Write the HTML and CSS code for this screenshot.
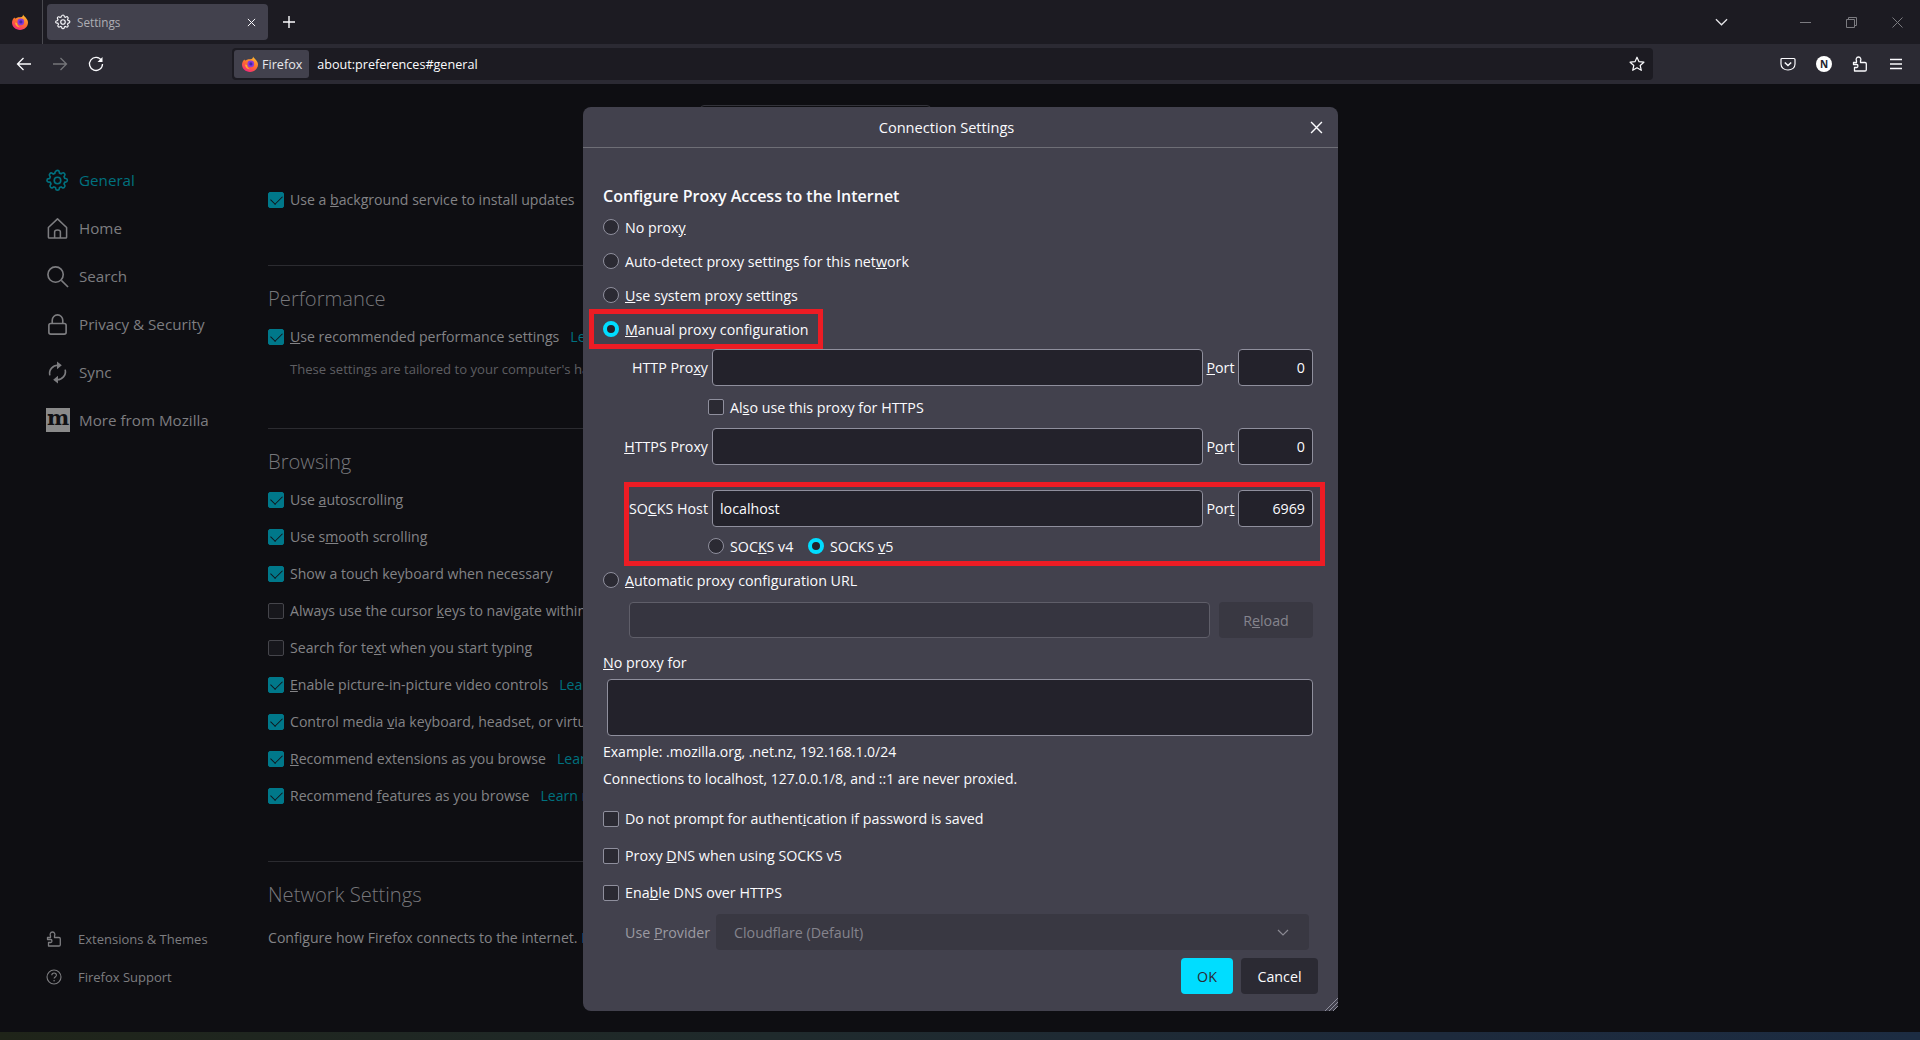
FILE: index.html
```html
<!DOCTYPE html>
<html lang="en">
<head>
  <meta charset="UTF-8">
  <title>Settings</title>
  <link rel="stylesheet" href="styles.css">
</head>
<body>

  <!-- iconos reutilizados -->
  <svg class="defs" width="0" height="0">
    <defs>
      <linearGradient id="fxBody" x1="0.8" y1="0" x2="0.3" y2="1">
        <stop offset="0" stop-color="#ffc02e"/>
        <stop offset="0.55" stop-color="#ff6a30"/>
        <stop offset="1" stop-color="#f5267c"/>
      </linearGradient>
      <symbol id="fx" viewBox="0 0 16 16">
        <path d="M11 0.500C11.600 2 13 2.600 14 4 15.300 5.600 16 7 16 8.600 16 12.700 12.400 16 8 16 3.600 16 0 12.700 0 8.600 0 6.400 1 4.600 2.400 3.400 2.600 4 3 4.300 3.600 4.500 5 3 8 3.400 9.600 3 10.800 2.700 11 1.500 11 0.500Z" fill="url(#fxBody)"/>
        <circle cx="8.800" cy="7.900" r="3.300" fill="#8a3ad8"/>
        <circle cx="8.900" cy="7.900" r="1.600" fill="#3f2aa8"/>
        <path d="M3 8.500C3.300 11.800 5.800 13.600 8.500 13.200 6.500 12.800 5 11.300 5 9Z" fill="#ffb02a"/>
      </symbol>
      <symbol id="gear" viewBox="0 0 24 24">
        <path d="M12 1.500c1 0 1.800.8 1.900 1.700l.2 1.100 1.700.7 1-.7c.8-.5 1.800-.4 2.400.3.700.7.800 1.700.2 2.500l-.6.900.7 1.700 1.100.2c.9.100 1.700.9 1.700 1.900s-.8 1.800-1.700 1.900l-1.100.2-.7 1.700.6.900c.6.800.5 1.800-.2 2.500-.6.700-1.600.8-2.400.3l-1-.7-1.700.7-.2 1.100c-.1.900-.9 1.700-1.900 1.700s-1.800-.8-1.900-1.700l-.2-1.100-1.700-.7-1 .7c-.8.500-1.800.4-2.400-.3-.7-.7-.8-1.700-.2-2.500l.6-.9-.7-1.700-1.100-.2C1.800 13.800 1 13 1 12s.8-1.800 1.700-1.900l1.100-.2.7-1.700-.6-.9c-.6-.8-.5-1.800.2-2.500.6-.7 1.600-.8 2.400-.3l1 .7 1.700-.7.2-1.100C10.200 2.300 11 1.500 12 1.500Z" fill="none" stroke="currentColor" stroke-width="1.700"/>
        <circle cx="12" cy="12" r="3.400" fill="none" stroke="currentColor" stroke-width="1.700"/>
      </symbol>
      <symbol id="puzzle" viewBox="0 0 16 16">
        <path d="M1.500 6.500h3V4.800C3.800 4 4 1 6.500 1S9.200 4 8.500 4.800v1.700h4.500c.8 0 1.300.5 1.300 1.300v5.900c0 .8-.5 1.300-1.300 1.300H2.500v-3.500h2.300c1.500 0 1.500-3 0-3H1.500Z" fill="none" stroke="currentColor" stroke-width="1.300" stroke-linejoin="round"/>
      </symbol>
    </defs>
  </svg>

  <!-- Barra de pestañas -->
  <header class="tabbar">
    <div class="tabbar-logo"><svg class="ico16"><use href="#fx"/></svg></div>
    <div class="tab">
      <svg class="tab-gear"><use href="#gear"/></svg>
      <span class="tab-title">Settings</span>
      <svg class="tab-close" viewBox="0 0 10 10"><path d="M1 1l8 8M9 1l-8 8" stroke="currentColor" stroke-width="1.100"/></svg>
    </div>
    <svg class="tab-new" viewBox="0 0 12 12"><path d="M6 0v12M0 6h12" stroke="currentColor" stroke-width="1.400"/></svg>
    <div class="tabbar-right">
      <svg class="tab-list" viewBox="0 0 14 8"><path d="M1 1l6 6 6-6" fill="none" stroke="currentColor" stroke-width="1.400"/></svg>
      <div class="winbtn"><svg width="11" height="11" viewBox="0 0 11 11"><path d="M0 5.500h11" stroke="#7b7b80"/></svg></div>
      <div class="winbtn"><svg width="11" height="11" viewBox="0 0 11 11"><path d="M.5 2.500h8v8h-8zM2.500 2.500v-2h8v8h-2" fill="none" stroke="#7b7b80"/></svg></div>
      <div class="winbtn"><svg width="11" height="11" viewBox="0 0 11 11"><path d="M.5.500l10 10M10.500.500l-10 10" stroke="#7b7b80"/></svg></div>
    </div>
  </header>

  <!-- Barra de navegación -->
  <nav class="toolbar">
    <svg class="tool-ico" viewBox="0 0 16 16"><path d="M15 8H1.500M7.500 2l-6 6 6 6" fill="none" stroke="#fbfbfe" stroke-width="1.300"/></svg>
    <svg class="tool-ico" viewBox="0 0 16 16"><path d="M1 8h13.500M8.500 2l6 6-6 6" fill="none" stroke="#75757a" stroke-width="1.300"/></svg>
    <svg class="tool-ico" viewBox="0 0 16 16"><path d="M13.500 4.500A6.500 6.500 0 1 0 14.500 8" fill="none" stroke="#fbfbfe" stroke-width="1.300"/><path d="M14.500 1v5h-5z" fill="#fbfbfe"/></svg>
    <div class="urlbar">
      <div class="identity"><svg class="ico16"><use href="#fx"/></svg><span>Firefox</span></div>
      <span class="url">about:preferences#general</span>
      <svg class="star" viewBox="0 0 16 16"><path d="M8 1.200l2 4.500 4.900.5-3.700 3.300 1.100 4.800L8 11.800l-4.300 2.500 1.100-4.800L1.100 6.200 6 5.700Z" fill="none" stroke="#fbfbfe" stroke-width="1.200" stroke-linejoin="round"/></svg>
    </div>
    <div class="tool-right">
      <svg class="tool-ico" viewBox="0 0 16 16"><path d="M2 2.500h12c.6 0 1 .4 1 1V8c0 3.600-3 6-7 6s-7-2.400-7-6V3.500c0-.6.400-1 1-1Z" fill="none" stroke="#fbfbfe" stroke-width="1.200"/><path d="M4.800 6.500L8 9.500l3.200-3" fill="none" stroke="#fbfbfe" stroke-width="1.500"/></svg>
      <div class="account">N</div>
      <svg class="tool-ico tool-white"><use href="#puzzle"/></svg>
      <svg class="tool-ico tool-last" viewBox="0 0 16 16"><path d="M2 3.500h12M2 8h12M2 12.500h12" stroke="#fbfbfe" stroke-width="1.300"/></svg>
    </div>
  </nav>

  <!-- Contenido de about:preferences, atenuado por el diálogo -->
  <div class="page">
    <aside class="sidebar">
      <ul class="cats">
        <li class="cat cat-active"><svg class="cat-ico"><use href="#gear"/></svg><span>General</span></li>
        <li class="cat">
          <svg class="cat-ico" viewBox="0 0 24 24"><path d="M12 2L2.500 11v10c0 .6.400 1 1 1h17c.6 0 1-.4 1-1V11ZM9 22v-6.500c0-1 .8-2 3-2s3 1 3 2V22" fill="none" stroke="currentColor" stroke-width="1.600" stroke-linejoin="round"/></svg>
          <span>Home</span>
        </li>
        <li class="cat">
          <svg class="cat-ico" viewBox="0 0 24 24"><circle cx="10" cy="10" r="8" fill="none" stroke="currentColor" stroke-width="1.700"/><path d="M16 16l7 7" stroke="currentColor" stroke-width="1.700"/></svg>
          <span>Search</span>
        </li>
        <li class="cat">
          <svg class="cat-ico" viewBox="0 0 24 24"><path d="M6.500 11V7.500a5.500 5.500 0 0 1 11 0V11M5 11h14c1 0 2 .8 2 2v7c0 1.200-1 2-2 2H5c-1 0-2-.8-2-2v-7c0-1.200 1-2 2-2Z" fill="none" stroke="currentColor" stroke-width="1.700"/></svg>
          <span>Privacy &amp; Security</span>
        </li>
        <li class="cat">
          <svg class="cat-ico" viewBox="0 0 24 24"><path d="M4 15a8.500 8.500 0 0 1 9-10.500M20 9a8.500 8.500 0 0 1-9 10.500" fill="none" stroke="currentColor" stroke-width="1.700"/><path d="M11.500 0.500l5 4-5 4zM12.500 15.500l-5 4 5 4z" fill="currentColor"/></svg>
          <span>Sync</span>
        </li>
        <li class="cat">
          <span class="moz-ico">m</span>
          <span>More from Mozilla</span>
        </li>
      </ul>
      <ul class="side-links">
        <li class="side-link"><svg class="side-ico"><use href="#puzzle"/></svg><span>Extensions &amp; Themes</span></li>
        <li class="side-link">
          <svg class="side-ico" viewBox="0 0 16 16"><circle cx="8" cy="8" r="7" fill="none" stroke="currentColor" stroke-width="1.100"/><path d="M5.800 6.200c0-3 4.600-3 4.600 0 0 1.700-2.300 1.800-2.300 3.400" fill="none" stroke="currentColor" stroke-width="1.100"/><circle cx="8.100" cy="11.800" r=".8" fill="currentColor"/></svg>
          <span>Firefox Support</span>
        </li>
      </ul>
    </aside>

    <main class="prefs">
      <div class="find-box"></div>
      <div class="pref pref-first"><span class="chk chk-on"></span><span>Use a <u>b</u>ackground service to install updates</span></div>
      <hr class="sep sep-a">

      <h2 class="sec-title">Performance</h2>
      <div class="pref"><span class="chk chk-on"></span><span><u>U</u>se recommended performance settings</span><a class="learn">Learn more</a></div>
      <p class="pref-note">These settings are tailored to your computer's hardware and operating system.</p>
      <hr class="sep sep-b">

      <h2 class="sec-title">Browsing</h2>
      <div class="pref"><span class="chk chk-on"></span><span>Use <u>a</u>utoscrolling</span></div>
      <div class="pref"><span class="chk chk-on"></span><span>Use s<u>m</u>ooth scrolling</span></div>
      <div class="pref"><span class="chk chk-on"></span><span>Show a tou<u>c</u>h keyboard when necessary</span></div>
      <div class="pref"><span class="chk"></span><span>Always use the cursor <u>k</u>eys to navigate within pages</span></div>
      <div class="pref"><span class="chk"></span><span>Search for te<u>x</u>t when you start typing</span></div>
      <div class="pref"><span class="chk chk-on"></span><span><u>E</u>nable picture-in-picture video controls</span><a class="learn">Learn more</a></div>
      <div class="pref"><span class="chk chk-on"></span><span>Control media <u>v</u>ia keyboard, headset, or virtual interface</span></div>
      <div class="pref"><span class="chk chk-on"></span><span><u>R</u>ecommend extensions as you browse</span><a class="learn">Learn more</a></div>
      <div class="pref"><span class="chk chk-on"></span><span>Recommend <u>f</u>eatures as you browse</span><a class="learn">Learn more</a></div>
      <hr class="sep sep-c">

      <h2 class="sec-title">Network Settings</h2>
      <p class="net-text">Configure how Firefox connects to the internet. <a class="learn">Learn more</a></p>
    </main>
  </div>

  <div class="desktop-strip"></div>

  <!-- Diálogo Connection Settings -->
  <section class="dialog">
    <header class="dlg-head">
      <span>Connection Settings</span>
      <svg class="dlg-close" viewBox="0 0 12 12"><path d="M1 1l10 10M11 1L1 11" stroke="#fbfbfe" stroke-width="1.300"/></svg>
    </header>

    <div class="dlg-body">
      <h3 class="dlg-title">Configure Proxy Access to the Internet</h3>

      <label class="opt"><span class="radio"></span><span>No prox<u>y</u></span></label>
      <label class="opt"><span class="radio"></span><span>Auto-detect proxy settings for this net<u>w</u>ork</span></label>
      <label class="opt"><span class="radio"></span><span><u>U</u>se system proxy settings</span></label>
      <label class="opt"><span class="radio radio-on"></span><span><u>M</u>anual proxy configuration</span></label>

      <div class="proxy-row row-http">
        <span class="proxy-label">HTTP Pro<u>x</u>y</span>
        <input class="field field-grow" type="text">
        <span class="port-label"><u>P</u>ort</span>
        <input class="field field-port" type="text" value="0">
      </div>
      <label class="opt opt-sub row-also"><span class="box"></span><span>Al<u>s</u>o use this proxy for HTTPS</span></label>
      <div class="proxy-row row-https">
        <span class="proxy-label"><u>H</u>TTPS Proxy</span>
        <input class="field field-grow" type="text">
        <span class="port-label">P<u>o</u>rt</span>
        <input class="field field-port" type="text" value="0">
      </div>
      <div class="proxy-row row-socks">
        <span class="proxy-label">SO<u>C</u>KS Host</span>
        <input class="field field-grow" type="text" value="localhost">
        <span class="port-label">Por<u>t</u></span>
        <input class="field field-port" type="text" value="6969">
      </div>
      <div class="opt opt-sub socks-ver">
        <label class="ver"><span class="radio"></span><span>SOC<u>K</u>S v4</span></label>
        <label class="ver"><span class="radio radio-on"></span><span>SOCKS <u>v</u>5</span></label>
      </div>

      <label class="opt"><span class="radio"></span><span><u>A</u>utomatic proxy configuration URL</span></label>
      <div class="url-row">
        <input class="field field-off" type="text">
        <button class="btn btn-off" type="button">R<u>e</u>load</button>
      </div>

      <div class="noproxy-label"><u>N</u>o proxy for</div>
      <textarea class="field noproxy"></textarea>
      <p class="hint hint-a">Example: .mozilla.org, .net.nz, 192.168.1.0/24</p>
      <p class="hint hint-b">Connections to localhost, 127.0.0.1/8, and ::1 are never proxied.</p>

      <label class="chk-row chk-first"><span class="box"></span><span>Do not prompt for authent<u>i</u>cation if password is saved</span></label>
      <label class="chk-row"><span class="box"></span><span>Proxy <u>D</u>NS when using SOCKS v5</span></label>
      <label class="chk-row"><span class="box"></span><span>Ena<u>b</u>le DNS over HTTPS</span></label>

      <div class="provider-row">
        <span class="provider-label">Use <u>P</u>rovider</span>
        <div class="provider-select">
          <span>Cloudflare (Default)</span>
          <svg width="12" height="7" viewBox="0 0 12 7"><path d="M1 1l5 5 5-5" fill="none" stroke="#8b8a93" stroke-width="1.200"/></svg>
        </div>
      </div>

      <div class="dlg-buttons">
        <button class="btn btn-ok" type="button">OK</button>
        <button class="btn btn-cancel" type="button">Cancel</button>
      </div>
    </div>

    <svg class="resizer" viewBox="0 0 14 14"><path d="M14 1L1 14M14 5L5 14M14 9L9 14" stroke="#8f8f9d" stroke-width="1"/></svg>

    <!-- Marcas rojas de la captura -->
    <div class="mark mark-manual"></div>
    <div class="mark mark-socks"></div>
  </section>

</body>
</html>
```

FILE: styles.css
```css
* {
  box-sizing: border-box;
}

html, body {
  margin: 0;
  height: 100%;
}

body {
  position: relative;
  display: flex;
  flex-direction: column;
  height: 1040px;
  overflow: hidden;
  background-color: #0e0e12;
  font-family: "Open Sans", "Noto Sans", sans-serif;
  font-size: 14.250px;
  color: #fbfbfe;
}

ul {
  list-style: none;
  margin: 0;
  padding: 0;
}

.defs {
  position: absolute;
}

.ico16 {
  width: 16px;
  height: 16px;
  flex: none;
}

/* Barra de pestañas */
.tabbar {
  display: flex;
  align-items: center;
  height: 44px;
  background-color: #1c1b22;
  flex: none;
}

.tabbar-logo {
  display: flex;
  align-items: center;
  width: 43px;
  height: 44px;
  padding-left: 12px;
  border-right: 1px solid #4a4a50;
}

.tab {
  display: flex;
  align-items: center;
  width: 221px;
  height: 36px;
  margin-left: 4px;
  padding: 0 8px;
  background-color: #42414d;
  border-radius: 4px;
}

.tab-gear {
  width: 16px;
  height: 16px;
  color: #fbfbfe;
  flex: none;
}

.tab-title {
  margin-left: 6px;
  font-size: 11.700px;
  color: #aeaeb4;
  flex: 1;
}

.tab-close {
  width: 9px;
  height: 9px;
  margin-right: 4px;
  color: #fbfbfe;
}

.tab-new {
  width: 12px;
  height: 12px;
  margin-left: 15px;
  color: #fbfbfe;
}

.tabbar-right {
  display: flex;
  align-items: center;
  margin-left: auto;
}

.tab-list {
  width: 13px;
  height: 8px;
  margin-right: 54px;
  color: #e4e4e8;
}

.winbtn {
  display: flex;
  justify-content: center;
  width: 46px;
}

/* Barra de navegación */
.toolbar {
  display: flex;
  align-items: center;
  height: 40px;
  padding-left: 16px;
  background-color: #2b2a33;
  flex: none;
}

.tool-ico {
  width: 16px;
  height: 16px;
  margin-right: 20px;
  flex: none;
}

.tool-last {
  margin-right: 16px;
}

.tool-white {
  color: #fbfbfe;
}

.urlbar {
  display: flex;
  align-items: center;
  width: 1421px;
  height: 32px;
  margin-left: 108px;
  padding: 0 8px 0 2px;
  background-color: #1c1b22;
  border-radius: 4px;
  flex: none;
}

.identity {
  display: flex;
  align-items: center;
  gap: 4px;
  height: 28px;
  padding: 0 7px 0 8px;
  background-color: #42414d;
  border-radius: 3px;
  font-size: 12.600px;
  color: #e8e8ec;
}

.url {
  margin-left: 8px;
  font-size: 12.600px;
  flex: 1;
}

.star {
  width: 16px;
  height: 16px;
}

.tool-right {
  display: flex;
  align-items: center;
  margin-left: auto;
}

.account {
  width: 16px;
  height: 16px;
  margin-right: 20px;
  border-radius: 50%;
  background-color: #fff;
  color: #23222b;
  font-size: 10px;
  font-weight: 700;
  line-height: 16px;
  text-align: center;
}

/* Página de ajustes */
.page {
  display: flex;
  flex: 1;
  min-height: 0;
}

.sidebar {
  display: flex;
  flex-direction: column;
  justify-content: space-between;
  width: 268px;
  padding: 72px 0 36px 46px;
  color: #7d7d80;
  flex: none;
}

.cat {
  display: flex;
  align-items: center;
  gap: 10px;
  height: 48px;
  font-size: 15.200px;
}

.cat-active {
  color: #00717f;
}

.cat-ico {
  width: 23px;
  height: 23px;
  flex: none;
}

.moz-ico {
  width: 24px;
  height: 24px;
  margin-right: -1px;
  background-color: #8a8a8a;
  color: #111114;
  font-family: "DejaVu Serif", serif;
  font-size: 21px;
  font-weight: 700;
  line-height: 20px;
  text-align: center;
  flex: none;
}

.side-link {
  display: flex;
  align-items: center;
  gap: 16px;
  height: 38px;
  font-size: 13px;
}

.side-ico {
  width: 16px;
  height: 16px;
  flex: none;
}

.prefs {
  position: relative;
  flex: 1;
  min-width: 0;
  padding-top: 97px;
  font-size: 14.100px;
  color: #838386;
  white-space: nowrap;
}

.find-box {
  position: absolute;
  top: 21px;
  left: 432px;
  width: 231px;
  height: 32px;
  border: 1px solid #33333a;
  border-radius: 4px;
}

.pref {
  display: flex;
  align-items: center;
  gap: 6px;
  height: 37px;
}

.chk {
  width: 16px;
  height: 16px;
  border: 1px solid #45454b;
  border-radius: 2px;
  background-color: #17171c;
  position: relative;
  flex: none;
}

.chk-on {
  border-color: #00788a;
  background-color: #00788a;
}

.chk-on::after {
  content: "";
  position: absolute;
  left: 2px;
  top: 2px;
  width: 10px;
  height: 6px;
  border-left: 1.300px solid #10141a;
  border-bottom: 1.300px solid #10141a;
  transform: rotate(-45deg);
}

.learn {
  margin-left: 5px;
  color: #00717f;
}

.net-text .learn {
  margin-left: 0;
}

.sep {
  width: 700px;
  margin: 0;
  border: 0;
  border-top: 1px solid #2b2b30;
}

.sep-a {
  margin-top: 47px;
}

.sep-b {
  margin-top: 49px;
}

.sep-c {
  margin-top: 47px;
}

.sec-title {
  margin: 16px 0 4px;
  height: 32px;
  font-size: 20.200px;
  font-weight: 300;
  line-height: 32px;
  color: #77777b;
}

.pref-note {
  height: 20px;
  margin: 4px 0 0 22px;
  font-size: 13.100px;
  line-height: 20px;
  color: #5e5e62;
}

.net-text {
  margin: 18px 0 0;
}

.desktop-strip {
  height: 8px;
  background: linear-gradient(90deg, #1f2419, #1f2a2c 40%, #1d2a3c 75%, #1c2c42);
  flex: none;
}

/* Diálogo */
.dialog {
  position: absolute;
  left: 583px;
  top: 107px;
  width: 755px;
  height: 904px;
  background-color: #42414d;
  border-radius: 8px;
}

.dlg-head {
  position: relative;
  display: flex;
  align-items: center;
  justify-content: center;
  height: 41px;
  padding-right: 28px;
  border-bottom: 1px solid #6e6e76;
  font-size: 14.600px;
}

.dlg-close {
  position: absolute;
  right: 15px;
  top: 14px;
  width: 13px;
  height: 13px;
}

.dlg-body {
  display: flex;
  flex-direction: column;
  padding: 38px 25px 0 20px;
}

.dlg-title {
  height: 20px;
  margin: 0 0 4px;
  font-size: 16px;
  font-weight: 600;
  line-height: 20px;
}

.opt {
  display: flex;
  align-items: center;
  gap: 6px;
  height: 34px;
}

.opt-sub {
  padding-left: 105px;
}

.radio {
  width: 16px;
  height: 16px;
  border: 1px solid #8f8f9d;
  border-radius: 50%;
  background-color: #2b2a33;
  flex: none;
}

.radio-on {
  border: 4px solid #00ddff;
  background-color: #23222b;
}

.box {
  width: 16px;
  height: 16px;
  border: 1px solid #8f8f9d;
  border-radius: 2px;
  background-color: #2b2a33;
  flex: none;
}

.proxy-row {
  display: flex;
  align-items: center;
  height: 37px;
}

.row-http {
  margin-top: 3px;
}

.row-also {
  margin-top: 4px;
}

.row-https {
  margin-top: 4px;
}

.row-socks {
  margin-top: 25px;
}

.socks-ver {
  gap: 0;
  margin-top: 2px;
}

.ver {
  display: flex;
  align-items: center;
  gap: 6px;
  width: 100px;
}

.proxy-label {
  width: 105px;
  margin-right: 4px;
  text-align: right;
  white-space: nowrap;
  flex: none;
}

.port-label {
  width: 35px;
  text-align: center;
  flex: none;
}

.field {
  height: 37px;
  padding: 0 7px;
  background-color: #23222b;
  border: 1px solid #8f8f9d;
  border-radius: 4px;
  color: #fbfbfe;
  font: inherit;
  outline: none;
}

.field-grow {
  flex: 1;
  min-width: 0;
}

.field-port {
  width: 75px;
  text-align: right;
  flex: none;
}

.url-row {
  display: flex;
  gap: 9px;
  margin: 5px 0 0 26px;
}

.field-off {
  flex: 1;
  height: 36px;
  background-color: #363540;
  border-color: #5f5e69;
}

.btn {
  height: 36px;
  border: 0;
  border-radius: 4px;
  font: inherit;
}

.btn-off {
  width: 94px;
  background-color: #393842;
  color: #85848d;
}

.noproxy-label {
  height: 20px;
  margin-top: 15px;
  line-height: 20px;
}

.noproxy {
  display: block;
  width: 706px;
  height: 57px;
  margin: 6px 0 0 4px;
  resize: none;
}

.hint {
  height: 20px;
  margin: 0;
  font-size: 14px;
  line-height: 20px;
}

.hint-a {
  margin-top: 6px;
}

.hint-b {
  margin-top: 7px;
}

.chk-row {
  display: flex;
  align-items: center;
  gap: 6px;
  height: 37px;
}

.chk-first {
  margin-top: 11px;
}

.provider-row {
  display: flex;
  align-items: center;
  margin-top: 3px;
  padding-left: 22px;
}

.provider-label {
  width: 91px;
  color: #9b9aa2;
  flex: none;
}

.provider-select {
  display: flex;
  align-items: center;
  justify-content: space-between;
  width: 593px;
  height: 36px;
  padding: 0 20px 0 18px;
  background-color: #393842;
  border-radius: 4px;
  color: #85848d;
}

.dlg-buttons {
  display: flex;
  justify-content: flex-end;
  gap: 8px;
  margin: 8px -5px 0 0;
}

.btn-ok {
  width: 52px;
  background-color: #00ddff;
  color: #2b2a33;
}

.btn-cancel {
  width: 77px;
  background-color: #2b2a33;
  color: #fbfbfe;
}

.resizer {
  position: absolute;
  right: 0;
  bottom: 0;
  width: 14px;
  height: 14px;
}

.mark {
  position: absolute;
  border: 5px solid #ed1c24;
}

.mark-manual {
  left: 6px;
  top: 202px;
  width: 234px;
  height: 40px;
}

.mark-socks {
  left: 41px;
  top: 375px;
  width: 701px;
  height: 84px;
}
```
